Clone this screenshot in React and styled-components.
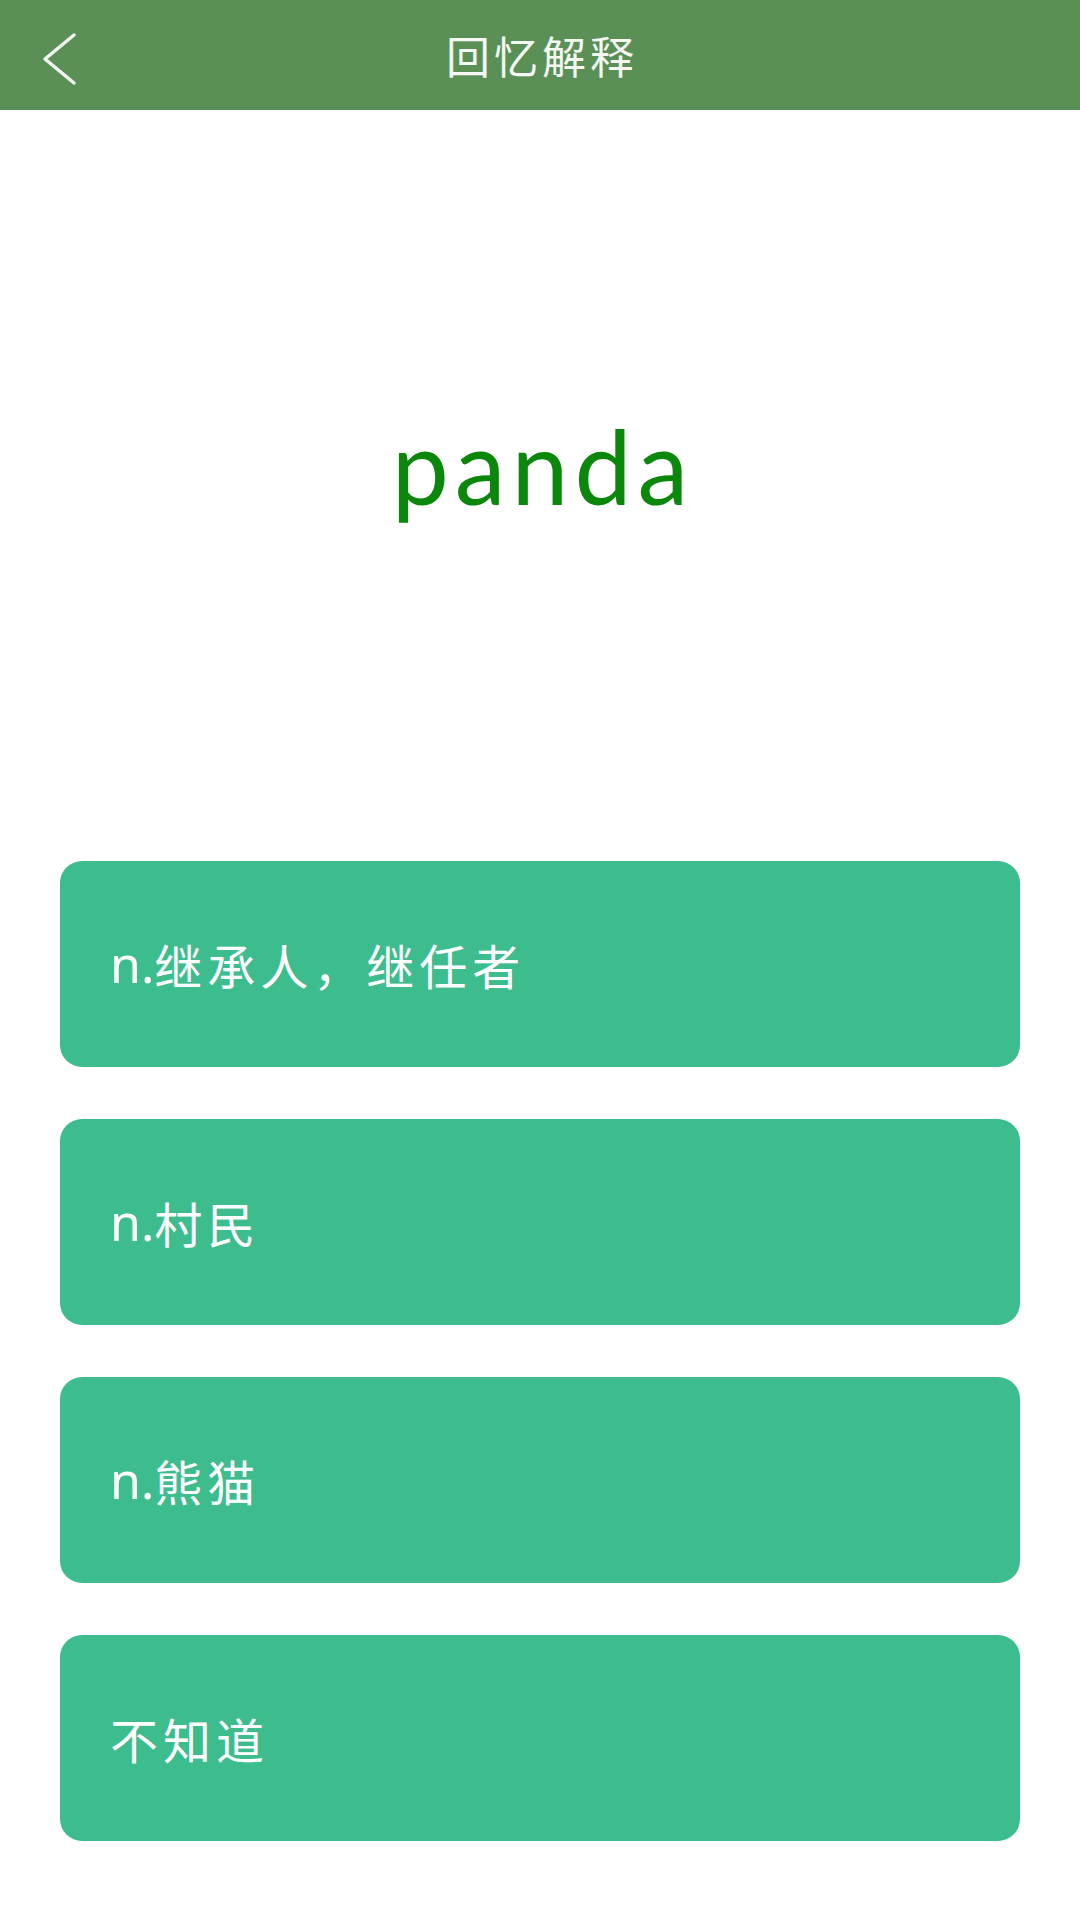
import React from 'react';
import styled, { createGlobalStyle } from 'styled-components';

const options = [
  { pos: 'n.', meaning: '继承人，继任者' },
  { pos: 'n.', meaning: '村民' },
  { pos: 'n.', meaning: '熊猫' },
  { pos: '', meaning: '不知道' },
];

const App = () => {
  return (
    <>
      <GlobalStyle />
      <Page>
        <Header>
          <BackButton aria-label='back'>
            <svg width='36' height='56' viewBox='0 0 36 56' fill='none'>
              <polyline
                points='32,4 3,28 32,52'
                stroke='#f1f5ef'
                strokeWidth='3.5'
                strokeLinecap='round'
                strokeLinejoin='round'
              />
            </svg>
          </BackButton>
          <Title>回忆解释</Title>
        </Header>

        <WordArea>
          <Word>panda</Word>
        </WordArea>

        <OptionList>
          {options.map((opt) => (
            <Option key={opt.meaning}>
              {opt.pos && <PartOfSpeech>{opt.pos}</PartOfSpeech>}
              {opt.meaning}
            </Option>
          ))}
        </OptionList>
      </Page>
    </>
  );
};

const GlobalStyle = createGlobalStyle`
  html, body {
    margin: 0;
    padding: 0;
    background: #ffffff;
  }
  body {
    font-family: 'Noto Sans', 'Noto Sans CJK SC', sans-serif;
  }
`;

const Page = styled.div`
  display: flex;
  flex-direction: column;
  width: 1080px;
  height: 1920px;
  background: #ffffff;
`;

const Header = styled.header`
  position: relative;
  display: flex;
  align-items: center;
  justify-content: center;
  height: 110px;
  background-color: #5a8f56;
  flex-shrink: 0;
`;

const BackButton = styled.button`
  position: absolute;
  left: 42px;
  top: 31px;
  display: flex;
  padding: 0;
  border: none;
  background: transparent;
  cursor: pointer;
`;

const Title = styled.h1`
  margin: 0 0 0 4px;
  color: #f4f7f2;
  font-family: 'Noto Sans CJK SC', sans-serif;
  font-size: 44px;
  font-weight: 400;
  letter-spacing: 4px;
  line-height: 1;
`;

const WordArea = styled.section`
  flex: 1;
  display: flex;
  align-items: center;
  justify-content: center;
  padding-bottom: 40px;
`;

const Word = styled.div`
  padding-left: 6px;
  color: #0b870b;
  font-family: Lato, 'Open Sans', sans-serif;
  font-size: 102px;
  font-weight: 400;
  letter-spacing: 6px;
  line-height: 1;
`;

const OptionList = styled.div`
  display: flex;
  flex-direction: column;
  gap: 52px;
  padding: 0 60px 79px;
`;

const Option = styled.button`
  display: flex;
  align-items: center;
  height: 206px;
  padding: 0 0 0 50px;
  border: none;
  border-radius: 22px;
  background-color: #3dbd8e;
  color: #ffffff;
  font-family: 'Noto Sans', 'Noto Sans CJK SC', sans-serif;
  font-size: 48px;
  font-weight: 400;
  letter-spacing: 5px;
  text-align: left;
  cursor: pointer;
`;

const PartOfSpeech = styled.span`
  letter-spacing: 0;
  font-size: 50px;
`;

export default App;
